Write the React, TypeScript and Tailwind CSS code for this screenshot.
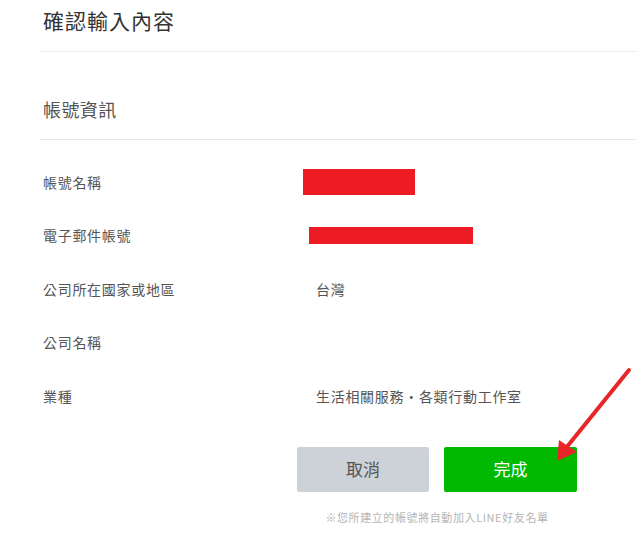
import React from "react";

const rows: { label: string; value?: string; redact?: { ml: number; w: number; h: number } }[] = [
  { label: "帳號名稱", redact: { ml: -13, w: 112, h: 26 } },
  { label: "電子郵件帳號", redact: { ml: -7, w: 164, h: 17 } },
  { label: "公司所在國家或地區", value: "台灣" },
  { label: "公司名稱" },
  { label: "業種", value: "生活相關服務・各類行動工作室" },
];

export default function App() {
  return (
    <div className="relative w-[636px] h-[547px] bg-white overflow-hidden font-['Noto_Sans_CJK_TC','Noto_Sans_CJK_JP',sans-serif]">
      <div className="pl-[40px]">
        <div className="h-[52px] pb-[12px] pl-[3px] flex items-center border-b border-[#ececec] text-[21px] leading-[28px] text-[#333] tracking-[1px]">
          確認輸入內容
        </div>
        <div className="h-[88px] pt-[27px] pl-[3px] flex items-center border-b border-[#e6e6e6] text-[18px] leading-[24px] text-[#555] tracking-[0.4px]">
          帳號資訊
        </div>
        <div className="mt-[15px] pl-[3px]">
          {rows.map((r) => (
            <div key={r.label} className="grid grid-cols-[273px_1fr] h-[53.5px] items-center text-[14px] leading-[20px] text-[#555] tracking-[0.7px]">
              <div>{r.label}</div>
              <div className="flex items-center">
                {r.redact ? (
                  <div
                    className="bg-[#ed1c24]"
                    style={{ marginLeft: r.redact.ml, width: r.redact.w, height: r.redact.h }}
                  />
                ) : (
                  <span>{r.value ?? ""}</span>
                )}
              </div>
            </div>
          ))}
        </div>
        <div className="ml-[257px] mt-[24px] w-[280px]">
          <div className="flex gap-[15px]">
            <button className="w-[132px] h-[45px] rounded-[2px] bg-[#cdd1d8] text-[#555] text-[17px] flex items-center justify-center">
              取消
            </button>
            <button className="w-[133px] h-[45px] rounded-[2px] bg-[#00b900] text-white text-[17px] flex items-center justify-center">
              完成
            </button>
          </div>
          <div className="mt-[17px] text-center text-[11px] leading-[16px] text-[#b5b5b5] tracking-[0.6px] whitespace-nowrap">
            ※您所建立的帳號將自動加入LINE好友名單
          </div>
        </div>
      </div>
      <svg className="absolute left-0 top-0 pointer-events-none" width="636" height="547" viewBox="0 0 636 547">
        <line x1="629" y1="370" x2="566" y2="448" stroke="#e8262a" strokeWidth="4" strokeLinecap="round" />
        <polygon points="557,461 559,440 577,452" fill="#e8262a" />
      </svg>
    </div>
  );
}
